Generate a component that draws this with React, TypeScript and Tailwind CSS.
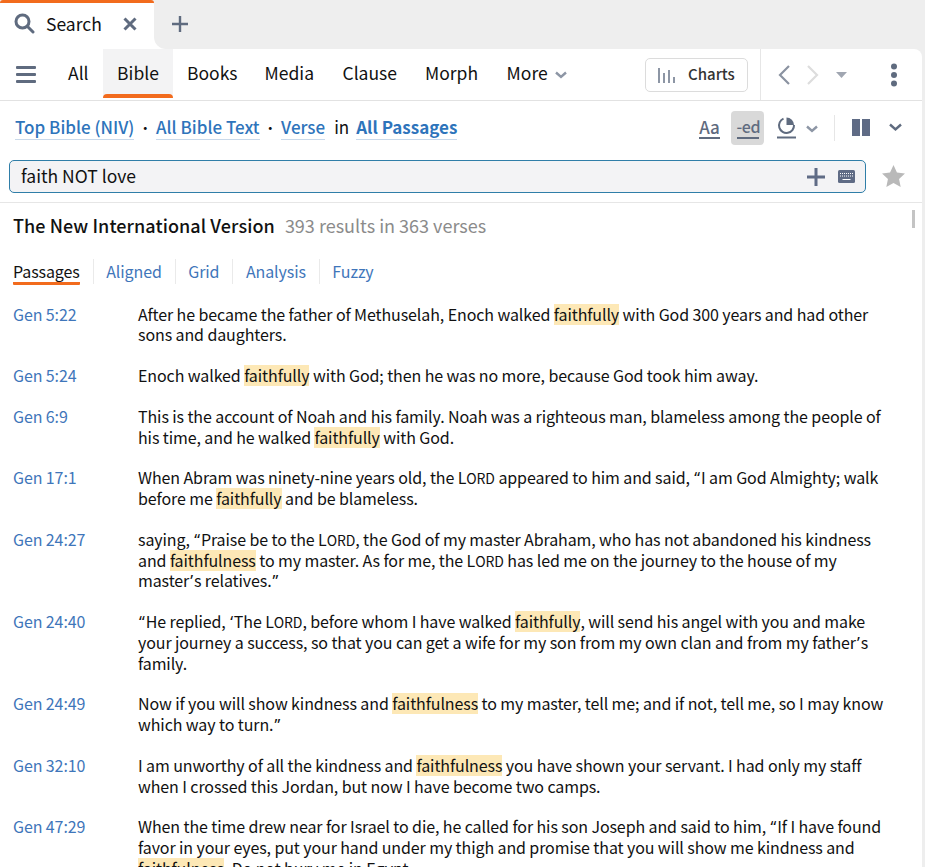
import React from "react";

const H = ({ children }: { children: React.ReactNode }) => (
  <span className="inline-block h-[21px] -my-[1px] leading-[20.75px] bg-[#fde8b6]">{children}</span>
);
const L = () => <span className="text-[14px] leading-[0]">ORD</span>;
const Q = ({ children }: { children: React.ReactNode }) => (
  <span className="[font-family:Noto_Sans,sans-serif] leading-[0] px-[1px]">{children}</span>
);

const rows: { r: string; t: React.ReactNode }[] = [
  { r: "Gen 5:22", t: <>After he became the father of Methuselah, Enoch walked <H>faithfully</H> with God 300 years and had other sons and daughters.</> },
  { r: "Gen 5:24", t: <>Enoch walked <H>faithfully</H> with God; then he was no more, because God took him away.</> },
  { r: "Gen 6:9", t: <>This is the account of Noah and his family. Noah was a righteous man, blameless among the people of his time, and he walked <H>faithfully</H> with God.</> },
  { r: "Gen 17:1", t: <>When Abram was ninety-nine years old, the L<L /> appeared to him and said, <Q>“</Q>I am God Almighty; walk before me <H>faithfully</H> and be blameless.</> },
  { r: "Gen 24:27", t: <>saying, <Q>“</Q>Praise be to the L<L />, the God of my master Abraham, who has not abandoned his kindness and <H>faithfulness</H> to my master. As for me, the L<L /> has led me on the journey to the house of my master<Q>’</Q>s relatives.<Q>”</Q></> },
  { r: "Gen 24:40", t: <><Q>“</Q>He replied, <Q>‘</Q>The L<L />, before whom I have walked <H>faithfully</H>, will send his angel with you and make your journey a success, so that you can get a wife for my son from my own clan and from my father<Q>’</Q>s family.</> },
  { r: "Gen 24:49", t: <>Now if you will show kindness and <H>faithfulness</H> to my master, tell me; and if not, tell me, so I may know which way to turn.<Q>”</Q></> },
  { r: "Gen 32:10", t: <>I am unworthy of all the kindness and <H>faithfulness</H> you have shown your servant. I had only my staff when I crossed this Jordan, but now I have become two camps.</> },
  { r: "Gen 47:29", t: <>When the time drew near for Israel to die, he called for his son Joseph and said to him, <Q>“</Q>If I have found favor in your eyes, put your hand under my thigh and promise that you will show me kindness and <H>faithfulness</H>. Do not bury me in Egypt.</> },
];

const Crumb = ({ children }: { children: React.ReactNode }) => (
  <span className="text-[#2e74bb] font-medium border-b border-[#c9d9ea] leading-[24px] h-[25px] block">{children}</span>
);
const Dot = () => <span className="w-[21.5px] flex justify-center text-[14px]">•</span>;

export default function App() {
  return (
    <div className="[font-family:Noto_Sans_CJK_SC,sans-serif] w-[925px] h-[867px] overflow-hidden bg-[#eeeeee] text-[#111] flex flex-col">
      {/* Tab strip */}
      <div className="flex h-[49px] shrink-0">
        <div className="w-[154px] bg-white flex flex-col rounded-t-[5px]">
          <div className="h-[3px] bg-[#f26b1d] rounded-t-[3px]" />
          <div className="flex-1 flex items-center pl-[14px] pb-[5px]">
            <svg width="21" height="21" viewBox="0 0 21 21" fill="none" stroke="#5f6b7f" strokeWidth="3">
              <circle cx="8.5" cy="8.5" r="6.5" />
              <path d="M13.5 13.5l5.5 5.5" strokeLinecap="round" />
            </svg>
            <span className="ml-[11px] text-[17.5px] leading-none">Search</span>
            <svg className="ml-[21px]" width="14" height="14" viewBox="0 0 14 14" stroke="#5f6b7f" strokeWidth="3">
              <path d="M1.5 1.5l11 11M12.5 1.5l-11 11" />
            </svg>
          </div>
        </div>
        <div className="flex-1 bg-white">
          <div className="h-full bg-[#eeeeee] rounded-bl-[12px] flex items-center pl-[18px] pb-[2px]">
            <svg width="16" height="16" viewBox="0 0 16 16" stroke="#5f6b7f" strokeWidth="2.4">
              <path d="M8 0v16M0 8h16" />
            </svg>
          </div>
        </div>
      </div>

      <div className="bg-white rounded-tr-[8px] flex-1 min-h-0 mr-[3px]">
        {/* Toolbar */}
        <div className="h-[52px] flex items-center border-b border-[#e2e2e2]">
          <svg className="ml-[16px]" width="20" height="18" viewBox="0 0 20 18" fill="#5f6b7f">
            <rect y="0" width="20" height="3" rx="1" />
            <rect y="7" width="20" height="3" rx="1" />
            <rect y="14" width="20" height="3" rx="1" />
          </svg>
          <div className="flex items-center text-[17.5px] h-full pb-[3px]">
            <span className="ml-[32px] w-[35px]">All</span>
            <span className="relative flex items-center justify-center w-[70px] self-stretch -mb-[1px] bg-[#f3f3f4]">
              Bible
              <span className="absolute left-0 right-0 bottom-0 h-[4px] bg-[#f26b1d] rounded-t-[4px]" />
            </span>
            <span className="ml-[14px]">Books</span>
            <span className="ml-[27px]">Media</span>
            <span className="ml-[28.5px]">Clause</span>
            <span className="ml-[28px]">Morph</span>
            <span className="ml-[28.5px]">More</span>
            <svg className="ml-[7px] mt-[3px]" width="12" height="8" viewBox="0 0 12 8" fill="none" stroke="#8d96a5" strokeWidth="2.4">
              <path d="M1 1.5l5 4.5 5-4.500" />
            </svg>
          </div>
          <div className="ml-auto flex items-center h-full">
            <div className="w-[103px] h-[34px] border border-[#dcdcdc] rounded-[5px] flex items-center pl-[12px] mr-[12px]">
              <svg width="18" height="16" viewBox="0 0 18 16" fill="#8d96a5">
                <rect x="0" y="1" width="2" height="15" />
                <rect x="5" y="6" width="2" height="10" />
                <rect x="10" y="3" width="2" height="13" />
                <rect x="15" y="10" width="2" height="6" />
              </svg>
              <span className="ml-[12px] text-[15px] font-medium text-[#333]">Charts</span>
            </div>
            <div className="w-px h-full bg-[#e6e6e6]" />
            <svg className="ml-[16px]" width="13" height="22" viewBox="0 0 13 22" fill="none" stroke="#8b93a1" strokeWidth="2.2">
              <path d="M12 2L3 11l9 9" />
            </svg>
            <svg className="ml-[17px]" width="13" height="22" viewBox="0 0 13 22" fill="none" stroke="#dddddd" strokeWidth="2.2">
              <path d="M1 2l9 9-9 9" />
            </svg>
            <svg className="ml-[16px]" width="11" height="6" viewBox="0 0 11 6" fill="#a0a6b1">
              <path d="M0 0h11L5.500 6z" />
            </svg>
            <svg className="ml-[43px] mr-[24px]" width="8" height="24" viewBox="0 0 8 24" fill="#5f6b7f">
              <circle cx="4" cy="3.500" r="3" />
              <circle cx="4" cy="12" r="3" />
              <circle cx="4" cy="20.500" r="3" />
            </svg>
          </div>
        </div>

        {/* Scope */}
        <div className="h-[59px] flex items-center pl-[15px] pb-[6px] text-[17px]">
          <Crumb>Top Bible (NIV)</Crumb>
          <Dot />
          <Crumb>All Bible Text</Crumb>
          <Dot />
          <Crumb>Verse</Crumb>
          <span className="ml-[9px] mr-[7px] mb-[2px]">in</span>
          <span className="text-[#2e74bb] font-bold border-b border-[#c9d9ea] leading-[24px] h-[25px] block">All Passages</span>
          <div className="ml-auto flex items-center mr-[20px]">
            <div className="w-[21px] text-[#5f6b7f] font-medium text-[17px] leading-[19px] border-b-2 border-[#5f6b7f] h-[22px] text-center">Aa</div>
            <div className="ml-[11px] w-[33px] h-[34px] bg-[#d9d9d9] rounded-[4px] flex justify-center pt-[6px]">
              <span className="text-[#5f6b7f] font-medium text-[16px] tracking-[-0.4px] leading-[19px] border-b-2 border-[#5f6b7f] h-[22px] w-[22px] text-center whitespace-nowrap">-ed</span>
            </div>
            <svg className="ml-[12px]" width="21" height="22" viewBox="0 0 21 22" fill="none" stroke="#5f6b7f">
              <path d="M7.500 1.600A7.500 7.500 0 1 0 18 8" strokeWidth="2" />
              <path d="M10.500 8V0.500A7.500 7.500 0 0 1 18 8z" fill="#5f6b7f" stroke="none" />
              <path d="M1 20.500h19" strokeWidth="2" />
            </svg>
            <svg className="ml-[9px] mt-[3px]" width="12" height="8" viewBox="0 0 12 8" fill="none" stroke="#8d96a5" strokeWidth="2.4">
              <path d="M1 1.500l5 4.500 5-4.500" />
            </svg>
            <div className="ml-[16px] w-px h-[26px] bg-[#e6e6e6]" />
            <div className="ml-[17px] flex gap-[2px]">
              <div className="w-[8px] h-[17px] bg-[#5f6b85]" />
              <div className="w-[8px] h-[17px] bg-[#5f6b85]" />
            </div>
            <svg className="ml-[19px]" width="13" height="9" viewBox="0 0 13 9" fill="none" stroke="#5f6b7f" strokeWidth="2.4">
              <path d="M1 1.500l5.500 5 5.500-5" />
            </svg>
          </div>
        </div>

        {/* Search input */}
        <div className="h-[43px] border-b border-[#e6e6e6] flex items-start pl-[9px]">
          <div className="w-[857px] h-[33px] bg-[#f3f3f5] border border-[#2f7ea8] rounded-[5px] flex items-center pl-[11px] pr-[10px] text-[17.5px]">
            <span>faith NOT love</span>
            <svg className="ml-auto" width="18" height="18" viewBox="0 0 18 18" stroke="#5f6b85" strokeWidth="3">
              <path d="M9 0v18M0 9h18" />
            </svg>
            <svg className="ml-[13px]" width="17" height="13" viewBox="0 0 17 13">
              <rect width="17" height="13" rx="1.500" fill="#5f6b85" />
              <path d="M2 3.500h13M2 6h13" stroke="#fff" strokeWidth="1" strokeDasharray="1 1" />
              <path d="M4.500 9.500h8" stroke="#fff" strokeWidth="1" />
            </svg>
          </div>
          <svg className="ml-[16px] mt-[5px]" width="23" height="22" viewBox="0 0 24 23" fill="#b9b9b9">
            <path d="M12 0l3.600 7.800 8.400 1-6.200 5.800 1.700 8.400L12 18.800 4.500 23l1.700-8.400L0 8.800l8.400-1z" />
          </svg>
        </div>

        {/* Results */}
        <div className="relative">
          <div className="absolute left-[912px] top-[7px] w-[3px] h-[18px] bg-[#c4c4c4]" />
          <div className="pl-[13px] pt-[10px] h-[46px] flex items-baseline text-[18px] leading-[24px]">
            <span className="font-medium tracking-[0.08px]">The New International Version</span>
            <span className="ml-[10px] text-[#8b8b8b]">393 results in 363 verses</span>
          </div>
          <div className="pl-[13px] h-[44px] mt-[10px] flex items-start text-[16px] tracking-[-0.1px]">
            <span className="border-b-[3px] border-[#f26b1d] rounded-[1px] h-[26px] leading-[24px]">Passages</span>
            {["Aligned", "Grid", "Analysis", "Fuzzy"].map((t) => (
              <React.Fragment key={t}>
                <span className="ml-[13px] w-px h-[25px] bg-[#eaeaea]" />
                <span className="ml-[12.5px] text-[#3f76ba] leading-[24px]">{t}</span>
              </React.Fragment>
            ))}
          </div>
          <div className="mt-[0.6px] text-[16px] leading-[20.75px] tracking-[-0.1px]">
            {rows.map((r) => (
              <div key={r.r} className="flex pb-5">
                <div className="w-[138px] pl-[13px] shrink-0 text-[#3f76ba]">{r.r}</div>
                <div className="w-[752px]">{r.t}</div>
              </div>
            ))}
          </div>
        </div>
      </div>
    </div>
  );
}
